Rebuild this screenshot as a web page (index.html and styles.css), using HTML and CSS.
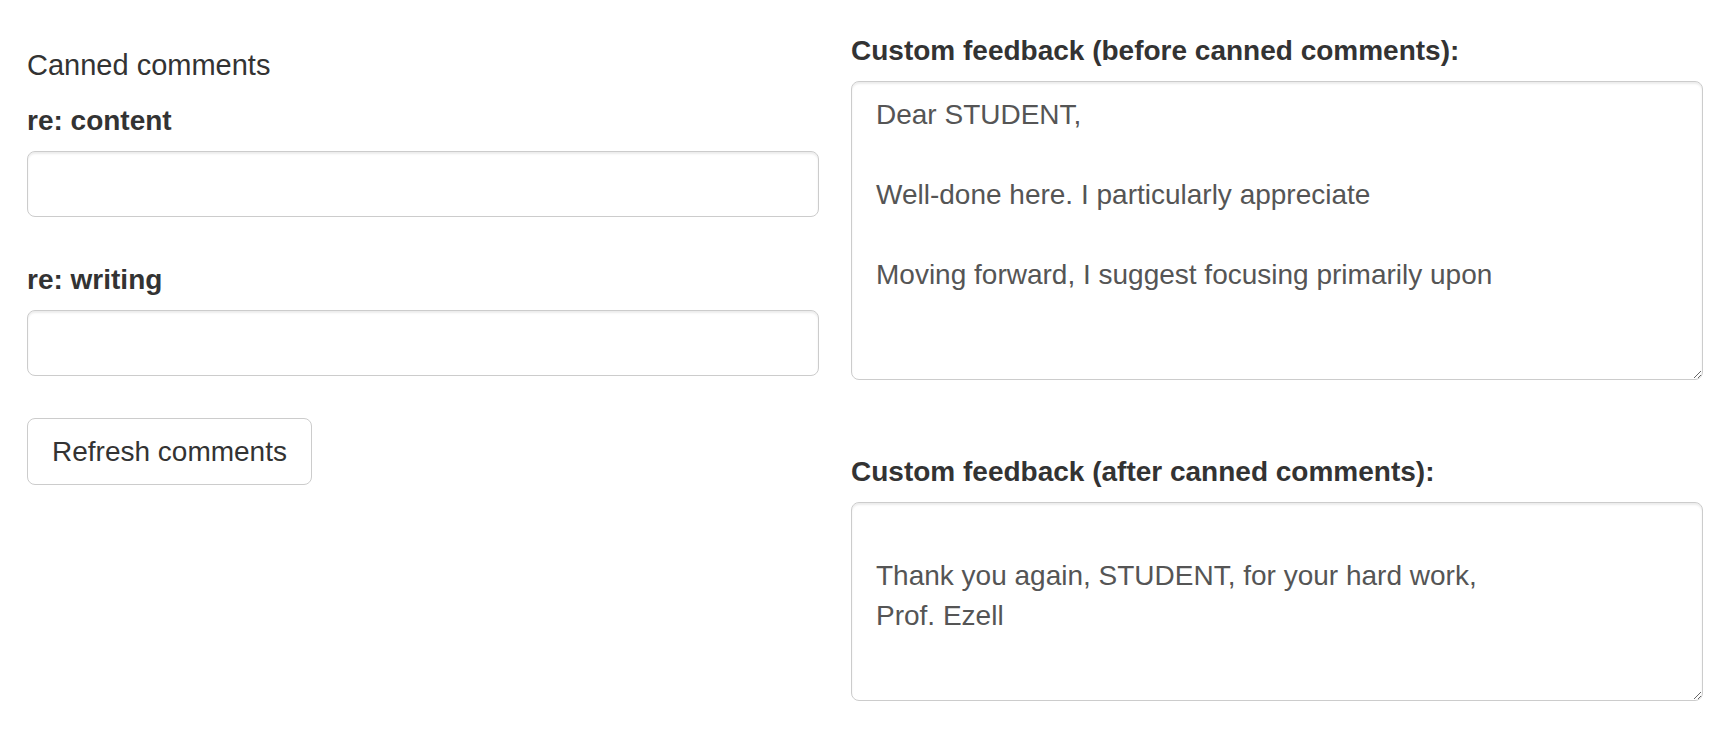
FILE: index.html
```html
<!DOCTYPE html>
<html lang="en">
<head>
<meta charset="utf-8">
<title>Feedback</title>
<link rel="stylesheet" href="styles.css">
</head>
<body>
<div class="page">
  <div class="col-left">
    <div class="heading">Canned comments</div>
    <div class="field">
      <label class="label" for="c1">re: content</label>
      <input id="c1" class="control input" type="text">
    </div>
    <div class="field field-gap">
      <label class="label" for="c2">re: writing</label>
      <input id="c2" class="control input" type="text">
    </div>
    <button class="btn" type="button">Refresh comments</button>
  </div>
  <div class="col-right">
    <div class="field">
      <label class="label" for="t1">Custom feedback (before canned comments):</label>
      <textarea id="t1" class="control area area-tall">Dear STUDENT,

Well-done here. I particularly appreciate

Moving forward, I suggest focusing primarily upon</textarea>
    </div>
    <div class="field field-gap2">
      <label class="label" for="t2">Custom feedback (after canned comments):</label>
      <textarea id="t2" class="control area area-short">

Thank you again, STUDENT, for your hard work,
Prof. Ezell</textarea>
    </div>
  </div>
</div>
</body>
</html>
```

FILE: styles.css
```css
* {
  box-sizing: border-box;
}

html, body {
  margin: 0;
  padding: 0;
  background: #fff;
}

body {
  font-family: "Liberation Sans", Arial, Helvetica, sans-serif;
  font-size: 28px;
  line-height: 40px;
  color: #333;
}

.page {
  display: grid;
  grid-template-columns: 792px 852px;
  column-gap: 32px;
  padding: 31px 0 0 27px;
  align-items: start;
}

.col-left {
  display: flex;
  flex-direction: column;
  align-items: flex-start;
  padding-top: 14px;
}

.col-right {
  display: flex;
  flex-direction: column;
}

.heading {
  font-size: 29px;
  line-height: 40px;
  margin-bottom: 16px;
}

.field {
  display: flex;
  flex-direction: column;
  width: 100%;
}

.field-gap {
  margin-top: 43px;
}

.field-gap2 {
  margin-top: 72px;
}

.label {
  font-weight: bold;
  line-height: 40px;
  margin-bottom: 10px;
}

.control {
  display: block;
  width: 100%;
  font-family: inherit;
  font-size: 28px;
  line-height: 40px;
  color: #555;
  background: #fff;
  border: 1px solid #ccc;
  border-radius: 8px;
  box-shadow: inset 0 2px 2px rgba(0, 0, 0, 0.075);
  margin: 0;
  outline: none;
}

.input {
  height: 66px;
  padding: 12px 24px;
}

.area {
  padding: 13px 24px;
  resize: vertical;
  overflow: auto;
}

.area-tall {
  height: 299px;
}

.area-short {
  height: 199px;
}

.btn {
  margin-top: 42px;
  font-family: inherit;
  font-size: 28px;
  line-height: 40px;
  color: #333;
  background: #fff;
  border: 1px solid #ccc;
  border-radius: 8px;
  padding: 12px 24px;
  height: 67px;
  cursor: pointer;
}
```
